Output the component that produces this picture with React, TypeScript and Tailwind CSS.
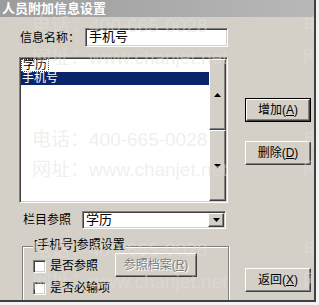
const sunken =
  "border border-t-[#808080] border-l-[#808080] border-r-white border-b-white shadow-[inset_1px_1px_0_#404040,inset_-1px_-1px_0_#d4d0c8]";
const raised =
  "border border-t-white border-l-white border-r-[#404040] border-b-[#404040] shadow-[inset_-1px_-1px_0_#808080,inset_1px_1px_0_#d4d0c8]";

const Arrow = ({ up }: { up?: boolean }) => (
  <svg width="7" height="4" viewBox="0 0 7 4">
    <polygon points={up ? "3.5,0 7,4 0,4" : "0,0 7,0 3.5,4"} fill="#000" />
  </svg>
);

const Btn = ({
  label,
  hot,
  isDefault,
  className = "",
}: {
  label: string;
  hot: string;
  isDefault?: boolean;
  className?: string;
}) => (
  <div
    className={`w-[66px] h-[24px] ${isDefault ? "border border-black" : ""} ${className}`}
  >
    <div
      className={`w-full h-full flex items-center justify-center bg-[#d4d0c8] ${raised}`}
    >
      <span>
        {label}(<span className="underline">{hot}</span>)
      </span>
    </div>
  </div>
);

const Checkbox = ({ label }: { label: string }) => (
  <div className="flex items-center h-[13px]">
    <div className={`w-[13px] h-[13px] bg-white ${sunken}`} />
    <span className="ml-[4px] leading-[13px]">{label}</span>
  </div>
);

const marks = [
  { top: 14, text: "电话：400-665-0028" },
  { top: 46, text: "网址：www.chanjet.net" },
  { top: 128, text: "电话：400-665-0028" },
  { top: 158, text: "网址：www.chanjet.net" },
  { top: 238, text: "电话：400-665-0028" },
  { top: 270, text: "网址：www.chanjet.net" },
];

export default function App() {
  return (
    <div className="w-[319px] h-[305px] bg-[#f2f2f2] overflow-hidden font-['Liberation_Sans','Noto_Sans_CJK_SC',sans-serif] text-[12px] text-black">
      <div className="relative w-[316px] h-[302px] bg-[#d4d0c8] border-r-2 border-b-2 border-r-[#404040] border-b-[#404040] overflow-hidden">
        <div className="h-[17px] bg-gradient-to-r from-[#9c9c9c] to-[#b8b8b8] text-white font-bold text-[13px] leading-[17px] pl-[2px]">
          人员附加信息设置
        </div>

        <div className="flex">
          {/* left column */}
          <div className="w-[229px] flex flex-col">
            <div className="flex items-center mt-[11px] ml-[20px] h-[19px]">
              <span className="w-[65px]">信息名称：</span>
              <div
                className={`w-[143px] h-[19px] bg-white ${sunken} pl-[3px] leading-[16px] text-[13px]`}
              >
                手机号
              </div>
            </div>

            <div
              className={`mt-[10px] ml-[19px] w-[209px] h-[146px] bg-white ${sunken} flex p-[1px]`}
            >
              <div className="flex-1 flex flex-col">
                <div className="h-[13px] leading-[13px] flex">
                  <span className="border border-dotted border-[#404040] px-[1px] leading-[11px]">
                    学历
                  </span>
                </div>
                <div className="h-[13px] leading-[13px] bg-[#0a246a] text-white px-[1px]">
                  手机号
                </div>
              </div>
              <div className="w-[17px] flex flex-col">
                <div
                  className={`flex-1 bg-[#d4d0c8] ${raised} flex items-center justify-center`}
                >
                  <Arrow up />
                </div>
                <div
                  className={`flex-1 bg-[#d4d0c8] ${raised} flex items-center justify-center`}
                >
                  <Arrow />
                </div>
              </div>
            </div>

            <div className="flex items-center mt-[8px] ml-[23px] h-[18px]">
              <span className="w-[59px]">栏目参照</span>
              <div
                className={`w-[144px] h-[18px] bg-white ${sunken} flex items-center pl-[3px] pr-[1px]`}
              >
                <span className="flex-1 text-[13px]">学历</span>
                <div
                  className={`w-[16px] h-[14px] bg-[#d4d0c8] ${raised} flex items-center justify-center`}
                >
                  <Arrow />
                </div>
              </div>
            </div>

            <div className="relative mt-[17px] ml-[22px] w-[207px] h-[70px] border border-[#808080] shadow-[inset_1px_1px_0_#fff,1px_1px_0_#fff] flex">
              <span className="absolute -top-[8px] left-[10px] bg-[#d4d0c8] leading-[13px] px-[1px]">
                [手机号]参照设置
              </span>
              <div className="w-[92px] pl-[10px] pt-[13px] flex flex-col gap-[9px]">
                <Checkbox label="是否参照" />
                <Checkbox label="是否必输项" />
              </div>
              <div className="pt-[6px]">
                <div
                  className={`w-[82px] h-[24px] bg-[#d4d0c8] ${raised} flex items-center justify-center text-[#808080] [text-shadow:1px_1px_0_#fff]`}
                >
                  <span>
                    参照档案(<span className="underline">R</span>)
                  </span>
                </div>
              </div>
            </div>
          </div>

          {/* right column */}
          <div className="flex flex-col ml-[16px] pt-[81px]">
            <Btn label="增加" hot="A" isDefault />
            <Btn label="删除" hot="D" className="mt-[19px]" />
            <Btn label="返回" hot="X" className="mt-[103px]" />
          </div>
        </div>

        {/* watermark overlay */}
        <div className="absolute inset-0 pointer-events-none">
          {marks.map((m, i) => (
            <div key={i}>
              <span
                className="absolute left-[32px] whitespace-nowrap text-[19px] leading-[24px] text-[#e0dfdc]/50"
                style={{ top: m.top }}
              >
                {m.text}
              </span>
              <span
                className="absolute left-[303px] whitespace-nowrap text-[19px] leading-[24px] text-[#e0dfdc]/50"
                style={{ top: m.top }}
              >
                {m.text}
              </span>
            </div>
          ))}
        </div>
      </div>
    </div>
  );
}
